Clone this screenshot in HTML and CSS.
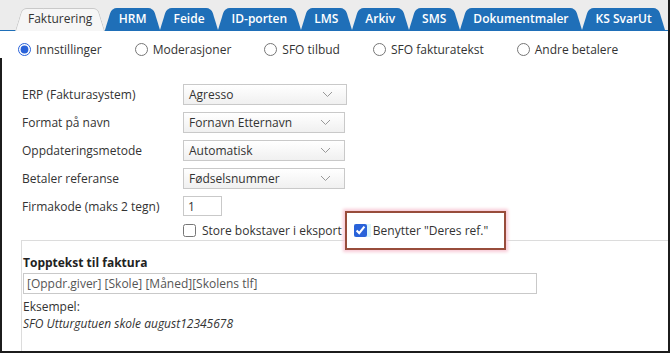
FILE: index.html
```html
<!DOCTYPE html>
<html lang="nb">
<head>
    <meta charset="UTF-8">
    <title>Fakturering - Innstillinger</title>
    <link rel="stylesheet" href="styles.css">
</head>
<body>
    <div class="page">
        <div class="tabs">
            <span class="tab active">Fakturering</span>
            <span class="tab">HRM</span>
            <span class="tab">Feide</span>
            <span class="tab">ID-porten</span>
            <span class="tab">LMS</span>
            <span class="tab">Arkiv</span>
            <span class="tab">SMS</span>
            <span class="tab">Dokumentmaler</span>
            <span class="tab">KS SvarUt</span>
        </div>

        <div class="options">
            <label class="option"><input type="radio" name="view" checked>Innstillinger</label>
            <label class="option"><input type="radio" name="view">Moderasjoner</label>
            <label class="option"><input type="radio" name="view">SFO tilbud</label>
            <label class="option"><input type="radio" name="view">SFO fakturatekst</label>
            <label class="option"><input type="radio" name="view">Andre betalere</label>
        </div>

        <div class="content">
            <div class="form">
                <span class="label">ERP (Fakturasystem)</span>
                <div class="select wide-select">
                    <span>Agresso</span>
                    <svg width="11" height="7" viewBox="0 0 11 7"><path d="M1 1l4.5 4.5L10 1" fill="none" stroke="#999" stroke-width="1"/></svg>
                </div>

                <span class="label">Format på navn</span>
                <div class="select">
                    <span>Fornavn Etternavn</span>
                    <svg width="11" height="7" viewBox="0 0 11 7"><path d="M1 1l4.5 4.5L10 1" fill="none" stroke="#999" stroke-width="1"/></svg>
                </div>

                <span class="label">Oppdateringsmetode</span>
                <div class="select">
                    <span>Automatisk</span>
                    <svg width="11" height="7" viewBox="0 0 11 7"><path d="M1 1l4.5 4.5L10 1" fill="none" stroke="#999" stroke-width="1"/></svg>
                </div>

                <span class="label">Betaler referanse</span>
                <div class="select">
                    <span>Fødselsnummer</span>
                    <svg width="11" height="7" viewBox="0 0 11 7"><path d="M1 1l4.5 4.5L10 1" fill="none" stroke="#999" stroke-width="1"/></svg>
                </div>

                <span class="label">Firmakode (maks 2 tegn)</span>
                <input class="short" type="text" value="1">

                <div class="checks">
                    <label class="check"><input type="checkbox">Store bokstaver i eksport</label>
                    <label class="check callout"><span class="hl"><input type="checkbox" checked></span>Benytter "Deres ref."</label>
                </div>
            </div>

            <div class="section">
                <div class="heading">Topptekst til faktura</div>
                <input class="wide" type="text" value="[Oppdr.giver] [Skole] [Måned][Skolens tlf]">
                <div class="example-label">Eksempel:</div>
                <div class="example">SFO Utturgutuen skole august12345678</div>
            </div>
        </div>
    </div>
</body>
</html>
```

FILE: styles.css
```css
body {
    margin: 0;
    font-family: 'Open Sans', 'Liberation Sans', sans-serif;
    font-size: 12px;
    color: #333;
    background: #fff;
}
.page {
    width: 670px;
    height: 353px;
    box-sizing: border-box;
    border-right: 2px solid #1c1c1c;
    border-bottom: 2px solid #1c1c1c;
    overflow: hidden;
    background: #fff;
}

/* tab bar */
.tabs {
    display: flex;
    align-items: flex-end;
    height: 31px;
    box-sizing: border-box;
    padding: 8px 0 0 15px;
    background: #ececec;
    border-bottom: 1px solid #1f6fb8;
}
.tab {
    position: relative;
    isolation: isolate;
    height: 22px;
    line-height: 22px;
    padding: 0 13.5px;
    color: #fff;
    font-size: 12px;
    font-weight: 600;
    white-space: nowrap;
}
.tab::before,
.tab::after {
    content: '';
    position: absolute;
    top: 0;
    bottom: 0;
    width: 60%;
    background: #1f6fb8;
    z-index: -1;
}
.tab::before {
    left: 0;
    transform-origin: bottom left;
    transform: skewX(-17deg);
    border-radius: 5px 0 0 0;
}
.tab::after {
    right: 0;
    transform-origin: bottom right;
    transform: skewX(17deg);
    border-radius: 0 5px 0 0;
}
.tab.active {
    height: 23px;
    margin-bottom: -1px;
    padding: 0 13px;
    color: #333;
    font-weight: 400;
    z-index: 1;
}
.tab.active::before,
.tab.active::after {
    background: #f6f6f6;
    border-top: 1px solid #c9c9c9;
}
.tab.active::before {
    border-left: 1px solid #c9c9c9;
}
.tab.active::after {
    border-right: 1px solid #c9c9c9;
}

/* radio row */
.options {
    display: flex;
    gap: 33px;
    padding: 10px 0 0 18px;
}
.option {
    display: inline-flex;
    align-items: center;
    gap: 5px;
    line-height: 17px;
}
.option input,
.check input {
    margin: 0;
    width: 13px;
    height: 13px;
    accent-color: #2962d9;
}

/* settings form */
.content {
    border-left: 2px solid #1c1c1c;
}
.form {
    display: grid;
    grid-template-columns: 161px 1fr;
    row-gap: 7px;
    align-items: center;
    padding: 26px 0 0 20px;
}
.label {
    line-height: 17px;
}
.select {
    display: flex;
    align-items: center;
    justify-content: space-between;
    width: 162px;
    height: 21px;
    box-sizing: border-box;
    padding: 0 13px 0 5px;
    border: 1px solid #c9c9c9;
    background: linear-gradient(#fff, #f0f0f0);
}
.wide-select {
    width: 164px;
}
.short {
    justify-self: start;
    width: 39px;
    height: 20px;
    box-sizing: border-box;
    margin: 0;
    padding: 0 4px;
    border: 1px solid #c9c9c9;
    font: inherit;
    color: #333;
}
.checks {
    grid-column: 2;
    display: flex;
    align-items: center;
    gap: 3px;
    margin-top: -1px;
}
.check {
    display: inline-flex;
    align-items: center;
    gap: 6px;
    line-height: 17px;
}
.callout {
    position: relative;
    z-index: 1;
    margin: -11px 0;
    padding: 9px 16px 9px 7px;
    border: 2px solid #984c3b;
    background: #fff;
    box-shadow: 0 0 3px 2px #f8cbd7;
}
.hl {
    display: inline-flex;
    background: #dcf6fb;
    padding: 0 4px 0 0;
    margin-right: -4px;
}

/* header text section */
.section {
    margin: 1px 0 0 19px;
    padding: 13px 0 0 1px;
    height: 120px;
    border-top: 1px solid #dcdcdc;
    border-left: 1px solid #dcdcdc;
}
.heading {
    font-weight: 700;
    color: #222;
    line-height: 17px;
}
.wide {
    display: block;
    width: 514px;
    height: 21px;
    box-sizing: border-box;
    margin: 2px 0 0;
    padding: 0 3px;
    border: 1px solid #c9c9c9;
    font: inherit;
    color: #555;
}
.example-label {
    margin-top: 4px;
    line-height: 17px;
}
.example {
    font-style: italic;
    line-height: 17px;
}
```
